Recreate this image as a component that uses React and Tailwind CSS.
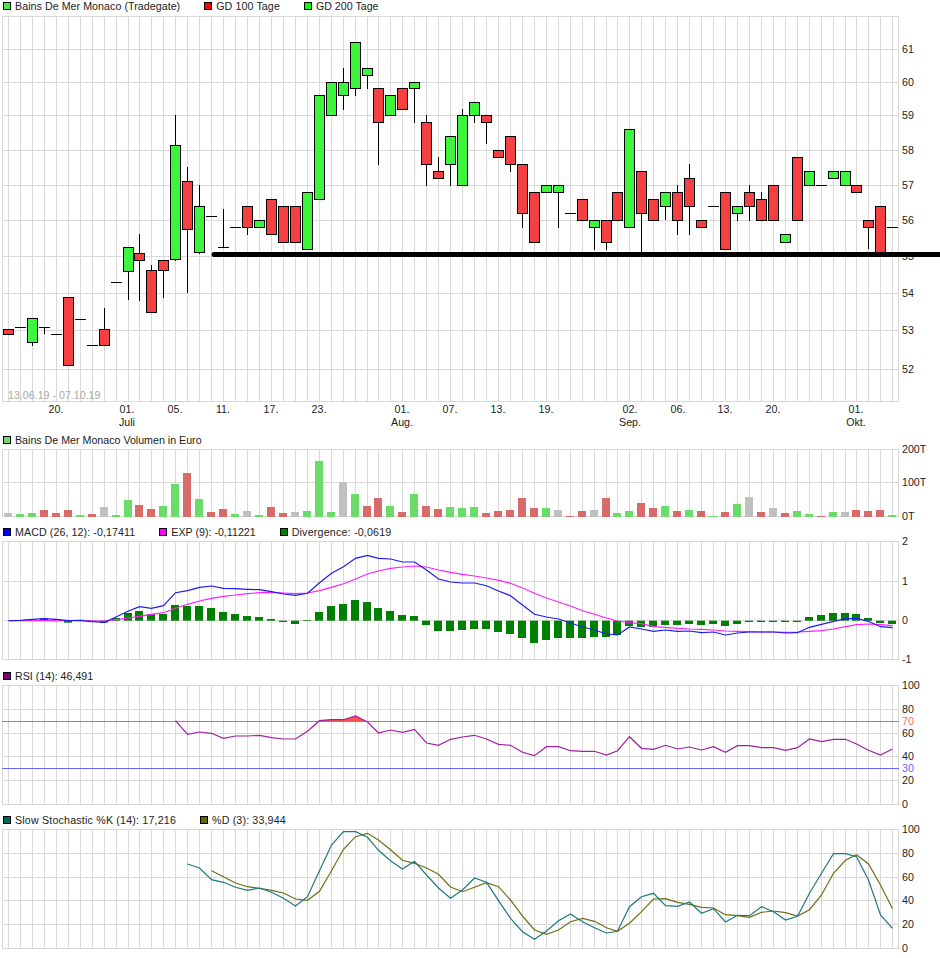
import React from 'react';

const px = (k) => Math.round(8 + 11.95 * k) + 0.5;
const COUNT = 75;
const FONT = 10.67;

// [top, bottom, type, wickTop, wickBottom], d = no body, just a dash
const candles = [
  [329, 334, 'r'], [327, 327, 'd'], [318, 342, 'g', 0, 346], [327, 327, 'd', 0, 334], [334, 334, 'd'],
  [297, 365, 'r'], [319, 319, 'd'], [345, 345, 'd'], [329, 345, 'r', 308], [282, 282, 'd'],
  [247, 271, 'g', 0, 300], [253, 260, 'r', 234, 301], [270, 312, 'r', 265], [260, 270, 'r', 0, 298], [145, 259, 'g', 115, 261],
  [181, 229, 'r', 167, 293], [206, 252, 'g', 185, 254], [216, 216, 'd'], [247, 247, 'd', 209], [227, 227, 'd'],
  [206, 227, 'r', 0, 235], [220, 227, 'g'], [199, 234, 'r'], [206, 242, 'r'], [206, 242, 'r'],
  [192, 249, 'g'], [95, 199, 'g'], [82, 115, 'g'], [82, 95, 'g', 68, 110], [42, 88, 'g', 0, 96],
  [68, 75, 'g', 0, 89], [88, 122, 'r', 0, 165], [95, 115, 'g'], [88, 109, 'r'], [82, 88, 'g', 0, 123],
  [122, 164, 'r', 115, 186], [171, 178, 'r', 157], [136, 164, 'g', 0, 186], [115, 185, 'g', 109], [102, 115, 'g', 0, 123],
  [115, 122, 'r', 0, 144], [150, 157, 'r'], [136, 164, 'r', 0, 172], [164, 213, 'r', 0, 228], [192, 242, 'r'],
  [185, 192, 'g'], [185, 192, 'g', 0, 228], [213, 213, 'd'], [199, 220, 'r'], [220, 227, 'g', 0, 250],
  [220, 242, 'r', 0, 250], [192, 220, 'r'], [129, 227, 'g'], [171, 213, 'r', 0, 253], [199, 220, 'r'],
  [192, 206, 'g', 0, 220], [192, 220, 'r', 185, 235], [178, 206, 'r', 164, 235], [220, 227, 'r'], [206, 206, 'd'],
  [192, 249, 'r'], [206, 213, 'g', 0, 221], [192, 206, 'r', 185, 221], [199, 220, 'r', 192], [185, 220, 'r'],
  [234, 242, 'g'], [157, 220, 'r'], [171, 185, 'g'], [185, 185, 'd'], [171, 178, 'g'],
  [171, 185, 'g'], [185, 192, 'r'], [220, 227, 'r', 0, 249], [206, 256, 'r'], [227, 227, 'd'],
];

const volumeTops = [
  513, 514, 513, 510, 513, 510, 515, 514, 507, 515, 500, 505, 509, 506, 484, 473, 499, 512, 509, 514, 511, 515, 507, 513, 512,
  511, 461, 512, 482, 494, 506, 498, 506, 512, 494, 506, 509, 507, 508, 507, 513, 511, 510, 498, 508, 508, 510, 516, 511, 510,
  498, 513, 511, 503, 508, 506, 511, 510, 511, 516, 512, 504, 497, 512, 508, 513, 511, 514, 516, 512, 512, 510, 511, 510, 515,
];
const volumeTypes =
  'aggrrrgragg' + 'rrggrgrrga' + 'grragggagr' + 'rgrgrrgggr' + 'rrrrgarrar' + 'ggrrgrgrgr' + 'gararggrga' + 'rrrg';

// divergence bar ends, 3x zoom values
const divergence = [
  572, 572, 570, 566, 568, 578, 570, 574, 578, 564, 549, 543, 552, 552, 525, 528, 528, 534, 546, 552, 558, 561, 567, 576, 582,
  570, 546, 528, 522, 510, 516, 534, 543, 555, 558, 585, 603, 603, 600, 597, 597, 606, 612, 624, 639, 630, 624, 624, 624, 621,
  621, 615, 588, 591, 591, 585, 585, 582, 585, 582, 588, 582, 576, 576, 576, 576, 576, 561, 555, 549, 549, 552, 564, 579, 582,
];
const macd = [
  572, 571, 568, 566, 568, 572, 572, 575, 577, 560, 543, 530, 535, 527, 488, 482, 472, 468, 475, 476, 478, 479, 485, 492, 496,
  490, 458, 430, 410, 385, 376, 385, 387, 396, 396, 420, 447, 456, 459, 459, 467, 483, 497, 525, 553, 561, 567, 579, 591, 600,
  612, 615, 591, 597, 604, 600, 604, 603, 608, 606, 615, 609, 606, 606, 606, 609, 608, 592, 583, 574, 566, 565, 574, 590, 593,
];
const exp = [
  572, 572, 572, 572, 572, 572, 570, 573, 573, 569, 564, 559, 553, 548, 535, 523, 513, 505, 499, 495, 491, 488, 487, 489, 491,
  489, 482, 472, 461, 447, 432, 423, 415, 411, 408, 411, 420, 427, 433, 438, 444, 451, 460, 474, 490, 504, 516, 528, 542, 553,
  564, 573, 578, 581, 590, 592, 595, 597, 598, 600, 603, 604, 605, 606, 606, 607, 606, 604, 602, 597, 590, 584, 582, 584, 587,
];
const rsi = [
  182, 223, 216, 220, 235, 228, 228, 226, 233, 237, 237, 214, 182, 179, 179, 168, 186, 219, 210, 217, 208, 249, 256, 238, 231,
  226, 237, 253, 256, 277, 287, 260, 260, 272, 274, 274, 285, 272, 230, 265, 268, 256, 267, 261, 270, 260, 277, 257, 257, 263,
  263, 271, 263, 237, 245, 238, 238, 252, 271, 285, 267,
];
const stochK = [
  612, 624, 659, 667, 682, 691, 684, 697, 715, 738, 710, 632, 555, 515, 515, 532, 571, 602, 627, 604, 645, 684, 715, 690, 654,
  667, 722, 775, 815, 838, 813, 782, 762, 785, 803, 819, 814, 740, 710, 700, 737, 739, 726, 760, 746, 786, 766, 767, 740, 755,
  780, 769, 700, 640, 581, 581, 590, 660, 765, 805,
];
const stochD = [
  632, 650, 669, 680, 685, 691, 699, 717, 721, 694, 632, 568, 530, 520, 540, 569, 601, 610, 624, 643, 681, 695, 682, 668, 680,
  720, 768, 810, 823, 810, 785, 775, 784, 803, 814, 790, 755, 717, 716, 727, 733, 742, 744, 764, 767, 772, 757, 753, 758, 768,
  749, 705, 640, 601, 584, 612, 675, 746,
];

const points = (vals, startK, origin) =>
  vals.map((v, i) => `${px(startK + i)},${(origin + v / 3).toFixed(1)}`).join(' ');

function Legend({ items }) {
  return (
    <div className="flex h-3 items-center gap-6 pl-[3px] text-[10.67px] leading-3 text-[#222]">
      {items.map((it) => (
        <div key={it.label} className="flex items-center gap-1 whitespace-nowrap">
          <span className={`size-2 border border-black ${it.color}`} />
          <span className={it.tracking}>{it.label}</span>
        </div>
      ))}
    </div>
  );
}

function Chart({ top, height, rows, labels, children }) {
  const first = rows[0];
  const last = rows[rows.length - 1];
  return (
    <svg className="block overflow-visible" width="940" height={height} viewBox={`0 ${top} 940 ${height}`} fontSize={FONT}>
      <g stroke="#d9d9d9" strokeWidth="1">
        <line x1="2.5" x2="2.5" y1={first} y2={last} />
        <line x1="898.5" x2="898.5" y1={first} y2={last} />
        {Array.from({ length: COUNT }, (_, k) => (
          <line key={k} x1={px(k)} x2={px(k)} y1={first} y2={last} />
        ))}
        {rows.map((y) => (
          <line key={y} x1="2" x2="899" y1={y} y2={y} />
        ))}
      </g>
      {labels.map(([text, y, color]) => (
        <text key={text} x="902" y={y + 4} fill={color || '#222'}>
          {text}
        </text>
      ))}
      {children}
    </svg>
  );
}

const days = [
  ['20.', 56], ['01.', 127], ['05.', 175], ['11.', 223], ['17.', 271], ['23.', 319], ['01.', 402], ['07.', 450],
  ['13.', 498], ['19.', 546], ['02.', 630], ['06.', 678], ['13.', 725], ['20.', 773], ['01.', 856],
];
const months = [['Juli', 127], ['Aug.', 402], ['Sep.', 630], ['Okt.', 856]];

function Candle({ c, k }) {
  const [t, b, type, wt, wb] = c;
  const x = px(k);
  if (type === 'd') {
    return (
      <g stroke="#000">
        <line x1={x - 5.5} x2={x + 5.5} y1={t + 0.5} y2={t + 0.5} />
        {wt ? <line x1={x} x2={x} y1={wt} y2={t} /> : null}
        {wb ? <line x1={x} x2={x} y1={t} y2={wb} /> : null}
      </g>
    );
  }
  return (
    <g stroke="#000">
      {wt ? <line x1={x} x2={x} y1={wt} y2={t} /> : null}
      {wb ? <line x1={x} x2={x} y1={b} y2={wb} /> : null}
      <rect x={x - 5} y={t + 0.5} width="10" height={b - t} fill={type === 'g' ? '#3df53d' : '#f44040'} />
    </g>
  );
}

export default function App() {
  return (
    <div className="h-[958px] w-[940px] overflow-hidden bg-white font-['Liberation_Sans',Arial,sans-serif]">
      <Legend
        items={[
          { label: 'Bains De Mer Monaco (Tradegate)', color: 'bg-[#40f040]', tracking: 'tracking-[0.05px]' },
          { label: 'GD 100 Tage', color: 'bg-[#ff0000]', tracking: 'tracking-[0.1px]' },
          { label: 'GD 200 Tage', color: 'bg-[#00ff00]' },
        ]}
      />
      <Chart
        top={12}
        height={422}
        rows={[16.5, 49.5, 82.5, 115.5, 150.5, 185.5, 220.5, 256.5, 293.5, 330.5, 369.5, 401.5]}
        labels={[
          ['61', 49], ['60', 82], ['59', 115], ['58', 150], ['57', 185], ['56', 220],
          ['55', 256], ['54', 293], ['53', 330], ['52', 369],
        ]}
      >
        {candles.map((c, k) => (
          <Candle key={k} c={c} k={k} />
        ))}
        <line x1="214" x2="940" y1="254.5" y2="254.5" stroke="#000" strokeWidth="5" />
        <circle cx="214" cy="254.5" r="2.5" fill="#000" />
        <text x="8" y="399" fill="#a8a8a8">13.06.19 - 07.10.19</text>
        {days.map(([t, x]) => (
          <text key={x} x={x} y="413" textAnchor="middle" fill="#222">{t}</text>
        ))}
        {months.map(([t, x]) => (
          <text key={x} x={x} y="426" textAnchor="middle" fill="#222">{t}</text>
        ))}
      </Chart>

      <Legend items={[{ label: 'Bains De Mer Monaco Volumen in Euro', color: 'bg-[#6adc6a]' }]} />
      <Chart
        top={446}
        height={80}
        rows={[449.5, 482.5, 516.5]}
        labels={[['200T', 449], ['100T', 482], ['0T', 516]]}
      >
        {volumeTops.map((t, k) => {
          const type = volumeTypes[k];
          return (
            <rect
              key={k}
              x={px(k) - 4.5}
              y={t}
              width="8"
              height={517 - t}
              fill={type === 'g' ? '#6adc6a' : type === 'r' ? '#d96a6a' : '#c0c0c0'}
            />
          );
        })}
      </Chart>

      <Legend
        items={[
          { label: 'MACD (26, 12): -0,17411', color: 'bg-[#0000ff]', tracking: 'tracking-[0.09px]' },
          { label: 'EXP (9): -0,11221', color: 'bg-[#ff00ff]' },
          { label: 'Divergence: -0,0619', color: 'bg-[#008000]', tracking: 'tracking-[0.2px]' },
        ]}
      />
      <Chart
        top={538}
        height={132}
        rows={[541.5, 581.5, 620.5, 659.5]}
        labels={[['2', 541], ['1', 581], ['0', 620], ['-1', 659]]}
      >
        {divergence.map((v, k) => {
          const y = 430 + v / 3;
          return (
            <rect
              key={k}
              x={px(k) - 4.5}
              y={Math.min(y, 620.7)}
              width="8"
              height={Math.abs(y - 620.7)}
              fill="#008000"
            />
          );
        })}
        <polyline points={points(exp, 0, 430)} fill="none" stroke="#ff20ff" strokeWidth="1.2" />
        <polyline points={points(macd, 0, 430)} fill="none" stroke="#1c1cf0" strokeWidth="1.2" />
      </Chart>

      <Legend items={[{ label: 'RSI (14): 46,491', color: 'bg-[#800080]' }]} />
      <Chart
        top={682}
        height={132}
        rows={[685.5, 709.5, 733.5, 756.5, 780.5, 804.5]}
        labels={[
          ['100', 685], ['80', 709], ['70', 721, '#ff6666'], ['60', 733], ['40', 756],
          ['30', 768, '#6666ff'], ['20', 780], ['0', 804],
        ]}
      >
        <line x1="2" x2="899" y1="721.5" y2="721.5" stroke="#ee6060" />
        <line x1="2" x2="899" y1="768.5" y2="768.5" stroke="#6666ff" />
        <polygon
          points={`${px(26)},721.5 ${px(26)},720.6 ${px(27)},719.6 ${px(28)},719.6 ${px(29)},716 ${px(30)},722`}
          fill="#ff5050"
        />
        <polyline points={points(rsi, 14, 660)} fill="none" stroke="#a020a0" strokeWidth="1.2" />
      </Chart>

      <Legend
        items={[
          { label: 'Slow Stochastic %K (14): 17,216', color: 'bg-[#006666]', tracking: 'tracking-[0.19px]' },
          { label: '%D (3): 33,944', color: 'bg-[#666600]', tracking: 'tracking-[0.15px]' },
        ]}
      />
      <Chart
        top={826}
        height={132}
        rows={[829.5, 853.5, 877.5, 900.5, 924.5, 948.5]}
        labels={[['100', 829], ['80', 853], ['60', 877], ['40', 900], ['20', 924], ['0', 948]]}
      >
        <polyline points={points(stochD, 17, 660)} fill="none" stroke="#6e6e14" strokeWidth="1.2" />
        <polyline points={points(stochK, 15, 660)} fill="none" stroke="#1f7a7a" strokeWidth="1.2" />
      </Chart>
    </div>
  );
}
